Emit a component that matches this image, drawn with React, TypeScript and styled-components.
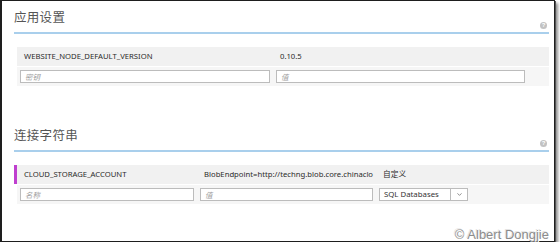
import styled, {createGlobalStyle} from 'styled-components'
import {ChevronDown} from 'lucide-react'

const GlobalStyle = createGlobalStyle`
  html, body {
    margin: 0;
    background: #fff;
  }
  body {
    font-family: 'Noto Sans', 'Noto Sans CJK SC', sans-serif;
    color: #333;
  }
`

interface Setting {
  name: string
  value: string
  kind?: string
}

const appSettings: Setting[] = [
  {name: 'WEBSITE_NODE_DEFAULT_VERSION', value: '0.10.5'},
]

const connectionStrings: Setting[] = [
  {
    name: 'CLOUD_STORAGE_ACCOUNT',
    value: 'BlobEndpoint=http://techng.blob.core.chinaclo',
    kind: '自定义',
  },
]

function App() {
  return (
    <>
      <GlobalStyle />
      <Frame>
        <Section>
          <Header>
            <Title>应用设置</Title>
            <Help>?</Help>
          </Header>
          {appSettings.map(s => (
            <Row key={s.name} $cols="256px 1fr">
              <Cell>{s.name}</Cell>
              <Cell>{s.value}</Cell>
            </Row>
          ))}
          <InputRow $cols="256px 1fr">
            <Field placeholder="密钥" />
            <Field placeholder="值" $right={24} />
          </InputRow>
        </Section>

        <Section $top={41}>
          <Header>
            <Title>连接字符串</Title>
            <Help>?</Help>
          </Header>
          {connectionStrings.map(s => (
            <Row key={s.name} $cols="180px 179px 1fr" $marked>
              <Cell>{s.name}</Cell>
              <Cell>{s.value}</Cell>
              <Cell>{s.kind}</Cell>
            </Row>
          ))}
          <InputRow $cols="180px 179px 1fr">
            <Field placeholder="名称" />
            <Field placeholder="值" />
            <Select>
              <SelectLabel>SQL Databases</SelectLabel>
              <SelectArrow>
                <ChevronDown size={7} strokeWidth={2.5} color="#666" />
              </SelectArrow>
            </Select>
          </InputRow>
        </Section>

        <Watermark>© Albert Dongjie</Watermark>
      </Frame>
    </>
  )
}

const Frame = styled.div`
  position: relative;
  box-sizing: border-box;
  width: 555px;
  height: 242px;
  border: 1px solid #1e1e1e;
  border-left-width: 2px;
  box-shadow: 1px 1px 0 #555, 3px 3px 3px rgba(0, 0, 0, 0.45);
  background: #fff;
  padding: 8px 5px 0 12px;
`

const Section = styled.section<{$top?: number}>`
  margin-top: ${p => p.$top ?? 0}px;
`

const Header = styled.div`
  display: flex;
  justify-content: space-between;
  height: 23px;
  border-bottom: 2px solid #a9cfec;
`

const Title = styled.h2`
  margin: 0;
  font-size: 12.5px;
  line-height: 17px;
  font-weight: 400;
  color: #555;
  letter-spacing: 0.3px;
`

const Help = styled.span`
  align-self: flex-end;
  margin: 0 2px 3px 0;
  width: 7px;
  height: 7px;
  border-radius: 50%;
  background: #c2c2c2;
  color: #fff;
  font-family: 'Liberation Sans', sans-serif;
  font-size: 6px;
  font-weight: bold;
  line-height: 7px;
  text-align: center;
`

const Row = styled.div<{$cols: string; $marked?: boolean}>`
  display: grid;
  grid-template-columns: ${p => p.$cols};
  margin-top: 13px;
  height: 19px;
  border-left: 3px solid ${p => (p.$marked ? '#bf3fcf' : 'transparent')};
  background: #f1f1f1;
  background-clip: padding-box;
`

const Cell = styled.div`
  padding-left: 7px;
  font-size: 7.7px;
  line-height: 19px;
  color: #2b2b2b;
  white-space: nowrap;
  overflow: hidden;
`

const InputRow = styled.div<{$cols: string}>`
  display: grid;
  grid-template-columns: ${p => p.$cols};
  align-items: start;
  margin-top: 1px;
  margin-left: 3px;
  height: 19px;
  padding-top: 3px;
  box-sizing: border-box;
  background: #f6f6f6;
`

const Field = styled.input<{$right?: number}>`
  box-sizing: border-box;
  margin: 0 ${p => p.$right ?? 3}px 0 3px;
  width: auto;
  min-width: 0;
  height: 13px;
  padding: 0 4px;
  border: 1px solid #bcbcbc;
  background: #fff;
  font-family: 'Noto Sans', 'Noto Sans CJK SC', sans-serif;
  font-size: 7.5px;
  outline: none;
  &::placeholder {
    color: #9c9c9c;
    font-style: italic;
  }
`

const Select = styled.div`
  display: flex;
  margin-left: 3px;
  height: 13px;
`

const SelectLabel = styled.div`
  box-sizing: border-box;
  width: 72px;
  height: 13px;
  padding-left: 4px;
  border: 1px solid #bcbcbc;
  background: #fff;
  font-size: 7.8px;
  line-height: 11px;
  color: #333;
`

const SelectArrow = styled.div`
  box-sizing: border-box;
  display: flex;
  align-items: center;
  justify-content: center;
  width: 17px;
  height: 13px;
  border: 1px solid #bcbcbc;
  border-left: none;
  background: #fff;
`

const Watermark = styled.div`
  position: absolute;
  right: 5px;
  bottom: -1px;
  font-family: 'Liberation Sans', sans-serif;
  font-size: 13px;
  line-height: 15px;
  color: #8c8c8c;
  text-shadow: 1px 1px 0 #fff, -1px -1px 0 #e4e4e4;
`

export default App
